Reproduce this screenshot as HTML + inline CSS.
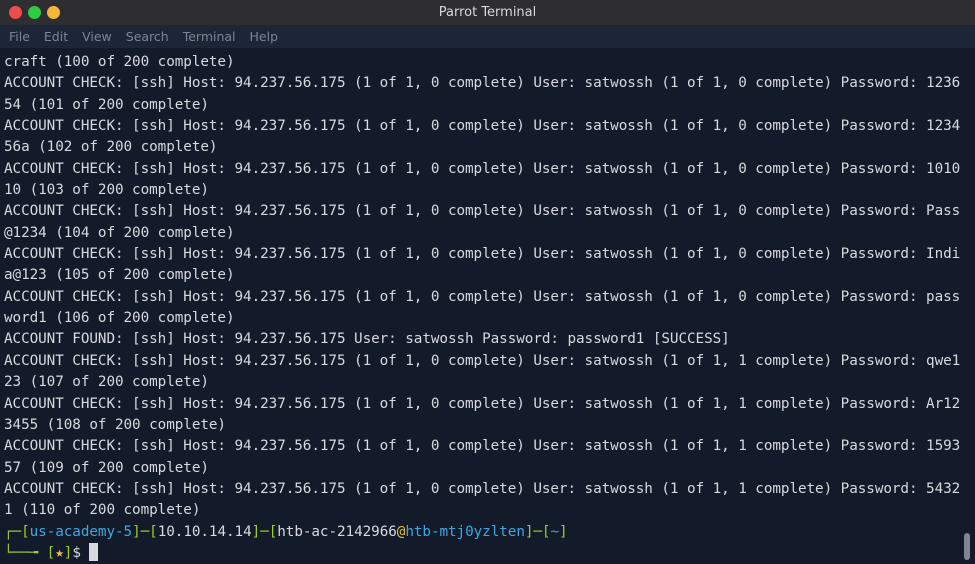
<!DOCTYPE html>
<html><head><style>
body{margin:0;width:975px;height:561px;overflow:hidden;background:#131b2a;font-family:"DejaVu Sans Mono","Liberation Mono",monospace;}
#title{position:absolute;left:0;top:0;width:975px;height:25px;background:#2d2d32;color:#d8d8d8;font-family:"DejaVu Sans","Liberation Sans",sans-serif;font-size:13px;line-height:25px;text-align:center;}
.dot{position:absolute;top:6px;width:13px;height:13px;border-radius:50%;}
#menu{position:absolute;left:0;top:25px;width:975px;height:23px;background:#1d2636;color:#7d8593;font-family:"DejaVu Sans","Liberation Sans",sans-serif;font-size:12.5px;line-height:23px;}
#menu span{margin-left:9px;margin-right:1px}
#term{position:absolute;left:4px;top:52px;color:#d6d9de;font-size:14.3px;letter-spacing:-0.07px;line-height:21.35px;white-space:pre;}
.g{color:#9acd32}.b{color:#3fa7e0}.y{color:#e8c04a}.w{color:#d6d9de}
#sb{position:absolute;left:964px;top:533px;width:6px;height:27px;border-radius:3px;background:#7d8597}
#cur{display:inline-block;width:9px;height:18px;background:#d6d9de;vertical-align:-4px}
</style></head><body>
<div id="title">Parrot Terminal
<div class="dot" style="left:9px;background:#ee4d4a"></div>
<div class="dot" style="left:28px;background:#2ecc40"></div>
<div class="dot" style="left:47px;background:#f5b735"></div>
</div>
<div id="menu"><span>File</span> <span>Edit</span> <span>View</span> <span>Search</span> <span>Terminal</span> <span>Help</span></div>
<div id="term">craft (100 of 200 complete)
ACCOUNT CHECK: [ssh] Host: 94.237.56.175 (1 of 1, 0 complete) User: satwossh (1 of 1, 0 complete) Password: 1236
54 (101 of 200 complete)
ACCOUNT CHECK: [ssh] Host: 94.237.56.175 (1 of 1, 0 complete) User: satwossh (1 of 1, 0 complete) Password: 1234
56a (102 of 200 complete)
ACCOUNT CHECK: [ssh] Host: 94.237.56.175 (1 of 1, 0 complete) User: satwossh (1 of 1, 0 complete) Password: 1010
10 (103 of 200 complete)
ACCOUNT CHECK: [ssh] Host: 94.237.56.175 (1 of 1, 0 complete) User: satwossh (1 of 1, 0 complete) Password: Pass
@1234 (104 of 200 complete)
ACCOUNT CHECK: [ssh] Host: 94.237.56.175 (1 of 1, 0 complete) User: satwossh (1 of 1, 0 complete) Password: Indi
a@123 (105 of 200 complete)
ACCOUNT CHECK: [ssh] Host: 94.237.56.175 (1 of 1, 0 complete) User: satwossh (1 of 1, 0 complete) Password: pass
word1 (106 of 200 complete)
ACCOUNT FOUND: [ssh] Host: 94.237.56.175 User: satwossh Password: password1 [SUCCESS]
ACCOUNT CHECK: [ssh] Host: 94.237.56.175 (1 of 1, 0 complete) User: satwossh (1 of 1, 1 complete) Password: qwe1
23 (107 of 200 complete)
ACCOUNT CHECK: [ssh] Host: 94.237.56.175 (1 of 1, 0 complete) User: satwossh (1 of 1, 1 complete) Password: Ar12
3455 (108 of 200 complete)
ACCOUNT CHECK: [ssh] Host: 94.237.56.175 (1 of 1, 0 complete) User: satwossh (1 of 1, 1 complete) Password: 1593
57 (109 of 200 complete)
ACCOUNT CHECK: [ssh] Host: 94.237.56.175 (1 of 1, 0 complete) User: satwossh (1 of 1, 1 complete) Password: 5432
1 (110 of 200 complete)
<span class="g">┌─[</span><span class="b">us-academy-5</span><span class="g">]─[</span><span class="w">10.10.14.14</span><span class="g">]─[</span><span class="w">htb-ac-2142966</span><span class="y">@</span><span class="b">htb-mtj0yzlten</span><span class="g">]─[</span><span class="b">~</span><span class="g">]</span>
<span class="g">└──╼ [</span><span class="y">★</span><span class="g">]</span><span class="w">$ </span><span id="cur"></span></div>
<div id="sb"></div>
</body></html>
